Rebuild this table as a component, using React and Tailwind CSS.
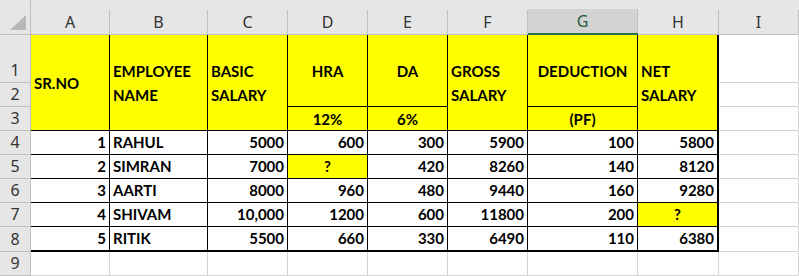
import React from 'react';

const COLS = ['A', 'B', 'C', 'D', 'E', 'F', 'G', 'H', 'I'];

const rows = [
  ['1', 'RAHUL', '5000', '600', '300', '5900', '100', '5800'],
  ['2', 'SIMRAN', '7000', '?', '420', '8260', '140', '8120'],
  ['3', 'AARTI', '8000', '960', '480', '9440', '160', '9280'],
  ['4', 'SHIVAM', '10,000', '1200', '600', '11800', '200', '?'],
  ['5', 'RITIK', '5500', '660', '330', '6490', '110', '6380'],
];

const cellFont = { fontFamily: 'Lato, "Liberation Sans", sans-serif' };
const headFont = { fontFamily: '"Noto Sans", "Open Sans", sans-serif' };

// column header strip (A, B, C ...)
const ColHead = ({ letter }) => {
  const selected = letter === 'G';
  return (
    <div
      className={`flex flex-col justify-end bg-[#e6e6e6] ${
        selected ? 'border-b-2 border-[#217346]' : 'border-b border-[#bfbfbf]'
      }`}
    >
      <div
        style={headFont}
        className={`flex h-[24px] items-end justify-center border-r border-[#bfbfbf] text-[16px] leading-[24px] ${
          selected ? 'bg-[#d2d2d2] text-[#1f5f3f]' : 'text-[#333333]'
        }`}
      >
        {letter}
      </div>
    </div>
  );
};

const RowHead = ({ n, span = '' }) => (
  <div
    style={headFont}
    className={`flex items-end justify-center border-r border-b border-[#bfbfbf] bg-[#e6e6e6] text-[16px] leading-[24px] text-[#333333] ${span}`}
  >
    {n}
  </div>
);

// yellow header cells of the table
const Head = ({ children, className = '', center = false }) => (
  <div
    style={cellFont}
    className={`flex items-center border-r border-b border-black bg-[#ffff00] text-[15px] font-bold leading-[24px] text-black ${
      center ? 'justify-center text-center' : 'pl-[3px]'
    } ${className}`}
  >
    <div>{children}</div>
  </div>
);

const Empty = ({ className = '' }) => (
  <div className={`border-r border-b border-[#d4d4d4] bg-white ${className}`} />
);

export default function App() {
  return (
    <div className="h-[276px] w-[799px] overflow-hidden bg-white">
      <div className="grid grid-cols-[31px_79px_98px_80px_80px_80px_80px_110px_81px_1fr] grid-rows-[35px_48px_24px_24px_24px_24px_24px_24px_25px_24px]">
        {/* corner */}
        <div className="flex items-end justify-end border-r border-b border-[#bfbfbf] bg-[#e6e6e6] pr-[4px] pb-[4px]">
          <svg width="16" height="15" viewBox="0 0 16 15">
            <polygon points="16,0 16,15 0,15" fill="#b8b8b8" />
          </svg>
        </div>
        {COLS.map((c) => (
          <ColHead key={c} letter={c} />
        ))}

        {/* rows 1-3: merged table header */}
        <RowHead n="1" />
        <Head className="row-span-3">SR.NO</Head>
        <Head className="row-span-3">
          EMPLOYEE
          <br />
          NAME
        </Head>
        <Head className="row-span-3">
          BASIC
          <br />
          SALARY
        </Head>
        <Head className="row-span-2" center>
          HRA
        </Head>
        <Head className="row-span-2" center>
          DA
        </Head>
        <Head className="row-span-3">
          GROSS
          <br />
          SALARY
        </Head>
        <Head className="row-span-2" center>
          DEDUCTION
        </Head>
        <Head className="row-span-3 border-r-2">
          NET
          <br />
          SALARY
        </Head>
        <Empty className="col-start-10" />

        <RowHead n="2" />
        <Empty className="col-start-10" />

        <RowHead n="3" />
        <Head className="col-start-5" center>
          12%
        </Head>
        <Head className="col-start-6" center>
          6%
        </Head>
        <Head className="col-start-8" center>
          (PF)
        </Head>
        <Empty className="col-start-10" />

        {/* data rows */}
        {rows.map((r, i) => {
          const last = i === rows.length - 1;
          return (
            <React.Fragment key={r[0]}>
              <RowHead n={i + 4} />
              {r.map((v, j) => {
                const isQ = v === '?';
                const isName = j === 1;
                return (
                  <div
                    key={j}
                    style={cellFont}
                    className={`flex items-end border-r border-black text-[15px] font-bold leading-[24px] text-black ${
                      last ? 'border-b-2' : 'border-b'
                    } ${j === 7 ? 'border-r-2' : ''} ${
                      isQ ? 'justify-center bg-[#ffff00]' : isName ? 'justify-start pl-[3px]' : 'justify-end pr-[3px]'
                    }`}
                  >
                    {v}
                  </div>
                );
              })}
              <Empty />
            </React.Fragment>
          );
        })}

        {/* row 9 */}
        <RowHead n="9" />
        {COLS.map((c) => (
          <Empty key={c} />
        ))}
      </div>
    </div>
  );
}
